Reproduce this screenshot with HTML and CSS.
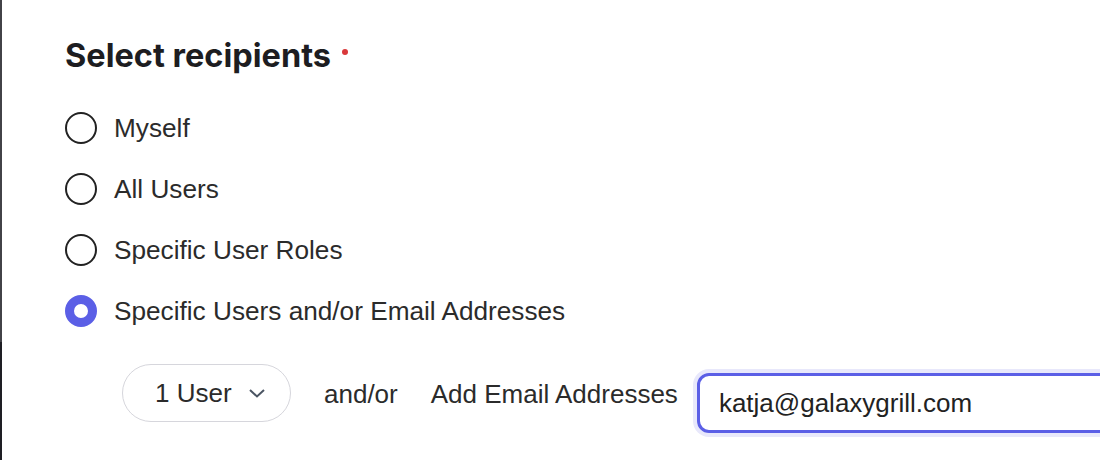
FILE: index.html
```html
<!DOCTYPE html>
<html lang="en">
<head>
  <meta charset="UTF-8">
  <title>Select recipients</title>
  <link rel="stylesheet" href="styles.css">
</head>
<body>
  <div class="edge"></div>
  <main class="panel">
    <h2 class="title">Select recipients<span class="required"></span></h2>
    <div class="options" role="radiogroup">
      <label class="option"><span class="radio"></span>Myself</label>
      <label class="option"><span class="radio"></span>All Users</label>
      <label class="option"><span class="radio"></span>Specific User Roles</label>
      <label class="option"><span class="radio checked"></span>Specific Users and/or Email Addresses</label>
    </div>
    <div class="recipients">
      <button class="user-select">1 User
        <svg width="18" height="10" viewBox="0 0 18 10"><path d="M2 2l7 6.5 7-6.5" fill="none" stroke="#4b5563" stroke-width="2"/></svg>
      </button>
      <span class="muted">and/or</span>
      <span class="muted">Add Email Addresses</span>
      <div class="email-input">katja@galaxygrill.com</div>
    </div>
  </main>
</body>
</html>
```

FILE: styles.css
```css
* {
  margin: 0;
  padding: 0;
  box-sizing: border-box;
}
body {
  display: flex;
  height: 460px;
  overflow: hidden;
  background: #fff;
  font-family: 'Liberation Sans', Arial, sans-serif;
  color: #2b2b2b;
}
.edge {
  width: 2px;
  flex-shrink: 0;
  background: linear-gradient(#424247 0, #424247 342px, #1e1e24 342px);
}
.panel {
  flex: 1;
  padding: 36px 0 0 63px;
  overflow: hidden;
}
.title {
  font-family: Inter, sans-serif;
  font-weight: 700;
  font-size: 32.5px;
  color: #1d1d21;
  display: flex;
  align-items: center;
  gap: 11px;
  line-height: 40px;
}
.required {
  width: 6px;
  height: 6px;
  border-radius: 50%;
  background: #d9383a;
  margin-top: -8px;
}
.options {
  margin-top: 36px;
  display: flex;
  flex-direction: column;
  gap: 29px;
}
.option {
  display: flex;
  align-items: center;
  gap: 17px;
  font-size: 26.2px;
  height: 32px;
}
.radio {
  width: 32px;
  height: 32px;
  border-radius: 50%;
  border: 2px solid #222;
  flex-shrink: 0;
}
.radio.checked {
  border: 9px solid #5b5fe6;
}
.recipients {
  margin: 37px 0 0 57px;
  display: flex;
  align-items: flex-start;
  white-space: nowrap;
}
.user-select {
  flex-shrink: 0;
  display: flex;
  align-items: center;
  gap: 16px;
  height: 58px;
  width: 169px;
  padding-left: 32px;
  border: 1.5px solid #d6d6dc;
  border-radius: 29px;
  background: #fff;
  font-family: 'Liberation Sans', Arial, sans-serif;
  font-size: 26px;
  color: #2b2b2b;
}
.user-select svg {
  flex-shrink: 0;
}
.muted {
  font-size: 26px;
  line-height: 60px;
  margin-left: 33px;
}
.email-input {
  margin: 9px 0 0 19px;
  flex-shrink: 0;
  width: 600px;
  height: 60px;
  border: 3.5px solid #5b5fe6;
  border-radius: 12px;
  box-shadow: 0 0 0 4px #e8e8fb;
  padding-left: 19px;
  display: flex;
  align-items: center;
  font-size: 26px;
  color: #222;
}
```
